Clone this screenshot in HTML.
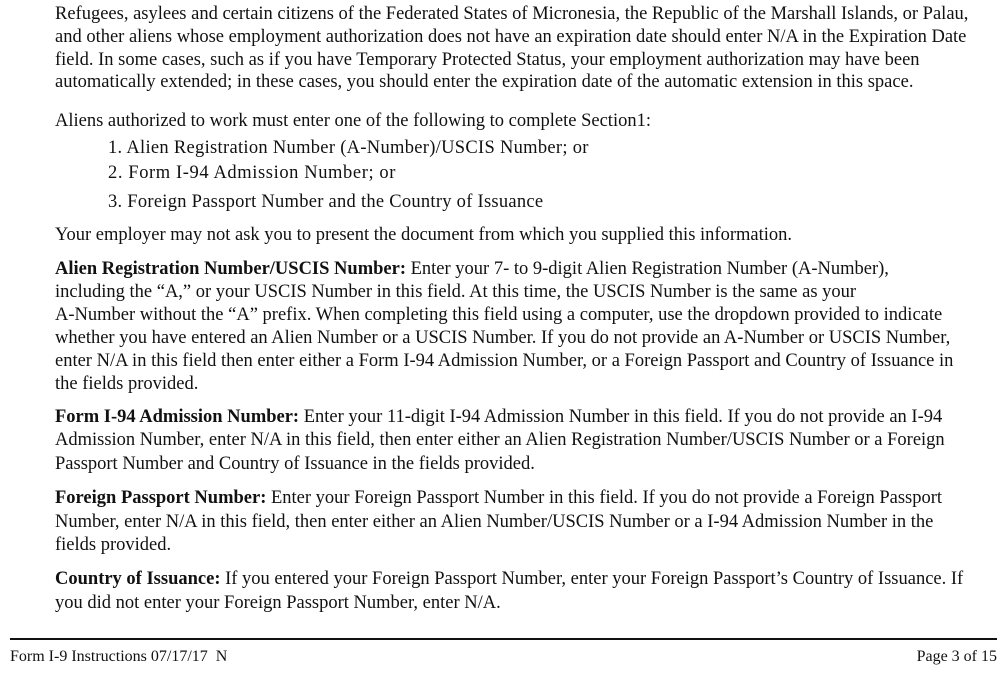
<!DOCTYPE html>
<html><head><meta charset="utf-8"><style>
body{margin:0;width:1007px;height:692px;background:#fff;position:relative;overflow:hidden;font-family:"Liberation Serif",serif;color:#111}
.l{position:absolute;left:55px;white-space:nowrap;font-size:18.5px;line-height:22px;height:22px}
.i{left:108px}
b{font-weight:bold}
</style></head><body>
<div class="l" style="top:3px">Refugees, asylees and certain citizens of the Federated States of Micronesia, the Republic of the Marshall Islands, or Palau,</div>
<div class="l" style="top:26px">and other aliens whose employment authorization does not have an expiration date should enter N/A in the Expiration Date</div>
<div class="l" style="top:49px">field. In some cases, such as if you have Temporary Protected Status, your employment authorization may have been</div>
<div class="l" style="top:71px">automatically extended; in these cases, you should enter the expiration date of the automatic extension in this space.</div>
<div class="l" style="top:110px">Aliens authorized to work must enter one of the following to complete Section1:</div>
<div class="l i" style="top:137px;letter-spacing:0.3px">1. Alien Registration Number (A-Number)/USCIS Number; or</div>
<div class="l i" style="top:162px;letter-spacing:0.6px">2. Form I-94 Admission Number; or</div>
<div class="l i" style="top:191px;letter-spacing:0.27px">3. Foreign Passport Number and the Country of Issuance</div>
<div class="l" style="top:224px">Your employer may not ask you to present the document from which you supplied this information.</div>
<div class="l" style="top:258px"><b>Alien Registration Number/USCIS Number:</b> Enter your 7- to 9-digit Alien Registration Number (A-Number),</div>
<div class="l" style="top:281px">including the “A,” or your USCIS Number in this field. At this time, the USCIS Number is the same as your</div>
<div class="l" style="top:304px">A-Number without the “A” prefix. When completing this field using a computer, use the dropdown provided to indicate</div>
<div class="l" style="top:327px">whether you have entered an Alien Number or a USCIS Number. If you do not provide an A-Number or USCIS Number,</div>
<div class="l" style="top:350px">enter N/A in this field then enter either a Form I-94 Admission Number, or a Foreign Passport and Country of Issuance in</div>
<div class="l" style="top:373px">the fields provided.</div>
<div class="l" style="top:406px"><b>Form I-94 Admission Number:</b> Enter your 11-digit I-94 Admission Number in this field. If you do not provide an I-94</div>
<div class="l" style="top:429px">Admission Number, enter N/A in this field, then enter either an Alien Registration Number/USCIS Number or a Foreign</div>
<div class="l" style="top:453px">Passport Number and Country of Issuance in the fields provided.</div>
<div class="l" style="top:487px"><b>Foreign Passport Number:</b> Enter your Foreign Passport Number in this field. If you do not provide a Foreign Passport</div>
<div class="l" style="top:511px">Number, enter N/A in this field, then enter either an Alien Number/USCIS Number or a I-94 Admission Number in the</div>
<div class="l" style="top:534px">fields provided.</div>
<div class="l" style="top:568px"><b>Country of Issuance:</b> If you entered your Foreign Passport Number, enter your Foreign Passport’s Country of Issuance. If</div>
<div class="l" style="top:592px">you did not enter your Foreign Passport Number, enter N/A.</div>
<div style="position:absolute;left:10px;top:638px;width:987px;height:2px;background:#111"></div>
<div style="position:absolute;left:10px;top:647px;font-size:16px;line-height:19px">Form I-9 Instructions 07/17/17&nbsp; N</div>
<div style="position:absolute;right:10px;top:647px;font-size:16px;line-height:19px">Page 3 of 15</div>
</body></html>
